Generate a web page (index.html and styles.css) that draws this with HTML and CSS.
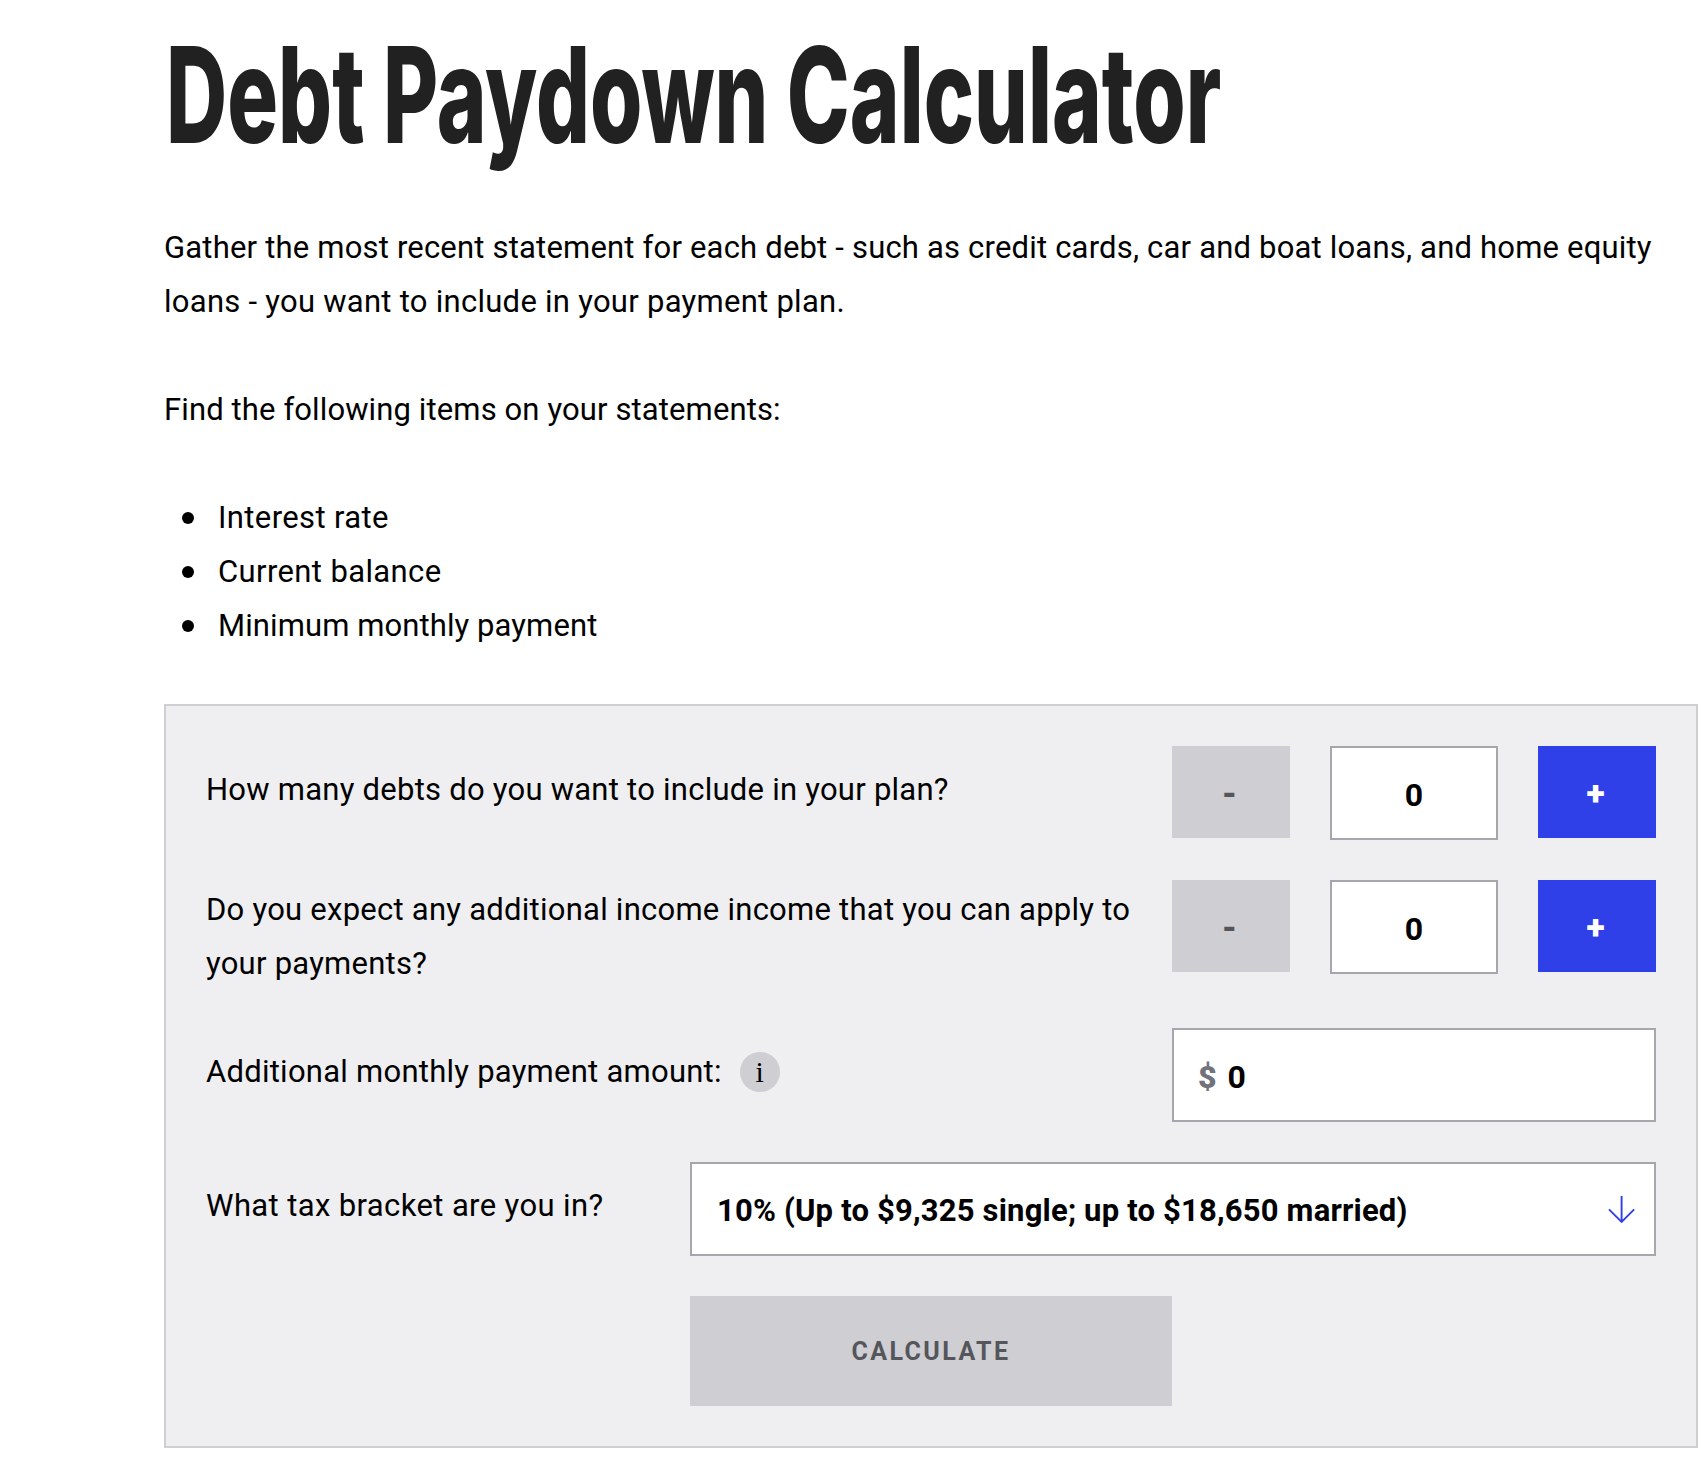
FILE: index.html
```html
<!DOCTYPE html>
<html lang="en">
<head>
<meta charset="utf-8">
<title>Debt Paydown Calculator</title>
<link rel="stylesheet" href="styles.css">
</head>
<body>
<main class="page">
  <h1 class="title"><span class="title-text">Debt Paydown Calculator</span></h1>
  <p class="copy">Gather the most recent statement for each debt - such as credit cards, car and boat loans, and home equity<br><span class="second-line">loans - you want to include in your payment plan.</span></p>
  <p class="copy find">Find the following items on your statements:</p>
  <ul class="items">
    <li>Interest rate</li>
    <li>Current balance</li>
    <li class="tight">Minimum monthly payment</li>
  </ul>
  <form class="panel">
    <div class="row">
      <label class="label" for="debts">How many debts do you want to include in your plan?</label>
      <div class="stepper">
        <button class="step minus" type="button" disabled>-</button>
        <input class="field count" id="debts" value="0">
        <button class="step plus" type="button">+</button>
      </div>
    </div>
    <div class="row">
      <label class="label top" for="income">Do you expect any additional income income that you can apply to<br>your payments?</label>
      <div class="stepper">
        <button class="step minus" type="button" disabled>-</button>
        <input class="field count" id="income" value="0">
        <button class="step plus" type="button">+</button>
      </div>
    </div>
    <div class="row">
      <div class="label-group">
        <label class="label" for="amount">Additional monthly payment amount:</label>
        <span class="info">i</span>
      </div>
      <div class="field money">
        <span class="currency">$</span>
        <input class="amount" id="amount" value="0">
      </div>
    </div>
    <div class="row">
      <span class="label loose">What tax bracket are you in?</span>
      <div class="field select">
        <span class="option">10% (Up to $9,325 single; up to $18,650 married)</span>
        <svg class="arrow" width="28" height="28" viewBox="0 0 28 28" fill="none" stroke="#3040e8" stroke-width="1.9"><path d="M13.6 0V26.5M1 13.4L13.6 26L26.2 13.4"/></svg>
      </div>
    </div>
    <button class="calculate" type="button" disabled>CALCULATE</button>
  </form>
</main>
</body>
</html>
```
FILE: styles.css
```css
* { box-sizing: border-box; }

body {
  margin: 0;
  background: #fff;
  color: #000;
  font: 31px/54px Roboto, "Liberation Sans", sans-serif;
}

.page { width: 1534px; margin: 0 0 0 164px; }

.title {
  margin: 0;
  height: 221px;
  padding: 15px 0 0 2px;
  overflow: hidden;
  color: #212121;
  font: 800 133px/160px Inter, "Liberation Sans", sans-serif;
  white-space: nowrap;
}
.title-text {
  display: block;
  width: 1500px;
  transform: scaleX(.637);
  transform-origin: 0 0;
}

.copy { margin: 0 0 54px; white-space: nowrap; letter-spacing: .19px; }
.second-line { letter-spacing: .27px; }
.find { letter-spacing: .12px; }

.items { list-style: none; margin: 0 0 51px; padding: 0 0 0 18px; letter-spacing: .38px; }
.items li { display: flex; align-items: center; gap: 24px; }
.items li::before {
  content: "";
  width: 12px;
  height: 12px;
  border-radius: 50%;
  background: #000;
}
.items .tight { letter-spacing: .1px; }

.panel {
  display: flex;
  flex-direction: column;
  gap: 40px;
  height: 744px;
  padding: 40px;
  border: 2px solid #cfced3;
  background: #efeff1;
}
.row { display: flex; justify-content: space-between; align-items: flex-start; }
.label { margin-top: 17px; margin-bottom: -3px; letter-spacing: .25px; white-space: nowrap; }
.label.top { margin-top: 3px; }
.label.loose { letter-spacing: .38px; }
.label-group { display: flex; align-items: flex-start; gap: 18px; }
.info {
  width: 40px;
  height: 40px;
  margin-top: 24px;
  border-radius: 50%;
  background: #cfced3;
  font: 30px/40px "Liberation Serif", serif;
  text-align: center;
}

.stepper { display: flex; gap: 40px; }
.step {
  width: 118px;
  height: 92px;
  padding: 2px 3px 0 0;
  border: 0;
  font: 900 34px/90px Roboto, "Liberation Sans", sans-serif;
}
.minus { background: #cfced3; color: #54565b; }
.plus { background: #3040e8; color: #fff; }

.field {
  height: 94px;
  border: 2px solid #a6a6ac;
  border-radius: 0;
  background: #fff;
  color: #000;
  font: bold 31px/54px Roboto, "Liberation Sans", sans-serif;
}
.count { width: 168px; padding: 3px 0 0; font-size: 32px; text-align: center; }
.money { display: flex; align-items: center; width: 484px; padding: 3px 24px 0; gap: 10px; font-size: 32px; }
.currency { color: #72727c; font-weight: 900; }
.amount { width: 300px; padding: 0 0 0 1px; border: 0; background: none; color: #000; font: inherit; }
.select {
  display: flex;
  align-items: center;
  justify-content: space-between;
  width: 966px;
  padding: 4px 18px 0 25px;
}
.option { letter-spacing: .19px; }
.arrow { margin-top: -2px; }

.calculate {
  width: 482px;
  height: 110px;
  margin-left: 484px;
  padding: 2px 0 0;
  border: 0;
  background: #cfced3;
  color: #54565b;
  font: bold 25px/108px Roboto, "Liberation Sans", sans-serif;
  letter-spacing: 2.4px;
}
```
